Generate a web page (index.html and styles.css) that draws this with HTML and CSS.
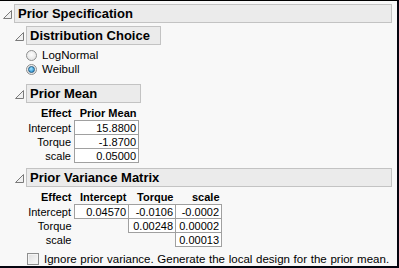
FILE: index.html
```html
<!DOCTYPE html>
<html lang="en">
<head>
    <meta charset="UTF-8">
    <title>Prior Specification</title>
    <link rel="stylesheet" href="styles.css">
</head>
<body>

<div class="frame">
    <div class="node top">
        <div class="node-head">
            <svg class="tri" width="9" height="9" viewBox="0 0 9 9"><polygon points="8.5,0.5 8.5,8.5 0.5,8.5" /></svg>
            <div class="title wide">Prior Specification</div>
        </div>

        <div class="node-body">
            <!-- Distribution Choice -->
            <div class="node">
                <div class="node-head">
                    <svg class="tri" width="9" height="9" viewBox="0 0 9 9"><polygon points="8.5,0.5 8.5,8.5 0.5,8.5" /></svg>
                    <div class="title">Distribution Choice</div>
                </div>
                <div class="inner radios">
                    <label class="radio"><span class="dot"></span>LogNormal</label>
                    <label class="radio on"><span class="dot"></span>Weibull</label>
                </div>
            </div>

            <!-- Prior Mean -->
            <div class="node">
                <div class="node-head">
                    <svg class="tri" width="9" height="9" viewBox="0 0 9 9"><polygon points="8.5,0.5 8.5,8.5 0.5,8.5" /></svg>
                    <div class="title mean-title">Prior Mean</div>
                </div>
                <div class="inner">
                    <table class="grid">
                        <tr><th class="lab">Effect</th><th class="c-mean">Prior Mean</th></tr>
                        <tr><td class="lab">Intercept</td><td class="v">15.8800</td></tr>
                        <tr><td class="lab">Torque</td><td class="v">-1.8700</td></tr>
                        <tr><td class="lab">scale</td><td class="v">0.05000</td></tr>
                    </table>
                </div>
            </div>

            <!-- Prior Variance Matrix -->
            <div class="node">
                <div class="node-head">
                    <svg class="tri" width="9" height="9" viewBox="0 0 9 9"><polygon points="8.5,0.5 8.5,8.5 0.5,8.5" /></svg>
                    <div class="title wide">Prior Variance Matrix</div>
                </div>
                <div class="inner">
                    <table class="grid">
                        <tr><th class="lab">Effect</th><th class="c-int">Intercept</th><th class="c-tq">Torque</th><th class="c-sc">scale</th></tr>
                        <tr><td class="lab">Intercept</td><td class="v">0.04570</td><td class="v">-0.0106</td><td class="v">-0.0002</td></tr>
                        <tr><td class="lab">Torque</td><td></td><td class="v">0.00248</td><td class="v">0.00002</td></tr>
                        <tr><td class="lab">scale</td><td></td><td></td><td class="v">0.00013</td></tr>
                    </table>
                </div>
            </div>

            <div class="inner">
                <label class="check"><span class="box"></span>Ignore prior variance. Generate the local design for the prior mean.</label>
            </div>
        </div>
    </div>
</div>

</body>
</html>
```

FILE: styles.css
```css
body {
    margin: 0;
    padding: 0;
    font-family: "Liberation Sans", Arial, sans-serif;
    color: #000;
}
.frame {
    box-sizing: border-box;
    width: 399px;
    height: 268px;
    padding: 3px 5px 0 3px;
    background-color: #f8f8f8;
    border-top: 1px solid #000;
    border-right: 2px solid #05050f;
    border-bottom: 2px solid #05050f;
    overflow: hidden;
}
.node-head {
    display: flex;
    align-items: center;
    gap: 2px;
}
.tri {
    flex: none;
    margin-top: 2px;
}
.tri polygon {
    fill: #f0f0f0;
    stroke: #7a7a7a;
    stroke-width: 1;
}
.title {
    height: 17px;
    line-height: 17px;
    padding: 0 10px 0 3px;
    font-size: 13px;
    font-weight: bold;
    background-color: #ebebeb;
    border: 1px solid #c3c3c3;
}
.wide {
    flex: 1;
}
.mean-title {
    width: 100px;
}
.node-body {
    padding-left: 12px;
}
.node-body .node {
    margin-top: 3px;
}
.inner {
    padding-left: 11px;
}

/* radio buttons */
.radios {
    padding-top: 3px;
    padding-bottom: 5px;
}
.radio {
    display: flex;
    align-items: center;
    height: 14px;
    font-size: 11.5px;
}
.dot {
    box-sizing: border-box;
    width: 11px;
    height: 11px;
    margin: 0 5px 0 0;
    border: 1px solid #8e8f8f;
    border-radius: 50%;
    background: radial-gradient(circle at 50% 40%, #fdfdfd, #dcdcdc);
    display: flex;
    align-items: center;
    justify-content: center;
}
.radio.on .dot::after {
    content: "";
    width: 5px;
    height: 5px;
    border-radius: 50%;
    border: 1px solid #1f5a82;
    background: radial-gradient(circle at 40% 35%, #9fe0ff, #1683c7);
}

/* tables */
.grid {
    border-collapse: collapse;
    font-size: 11px;
    margin-top: 2px;
    margin-bottom: 5px;
}
.grid th {
    font-weight: bold;
    text-align: right;
    height: 15px;
    padding: 0 2px 0 0;
}
.grid td {
    text-align: right;
    height: 13px;
    padding: 0 2px 0 0;
}
.grid .lab {
    width: 45px;
    padding-right: 3px;
}
.grid td.v {
    background-color: #fff;
    border: 1px solid #a0a0a0;
}
.c-mean {
    width: 62px;
}
.c-int {
    width: 52px;
}
.c-tq {
    width: 45px;
}
.c-sc {
    width: 44px;
}

/* checkbox */
.check {
    display: flex;
    align-items: center;
    height: 14px;
    margin-top: 4px;
    font-size: 11.5px;
    word-spacing: 0.5px;
    white-space: nowrap;
}
.box {
    box-sizing: border-box;
    flex: none;
    width: 12px;
    height: 12px;
    margin: 0 5px 0 1px;
    border: 1px solid #8e8f8f;
    background: linear-gradient(135deg, #dedede, #fbfbfb);
    box-shadow: inset 0 0 0 1px #f4f4f4;
}
```
